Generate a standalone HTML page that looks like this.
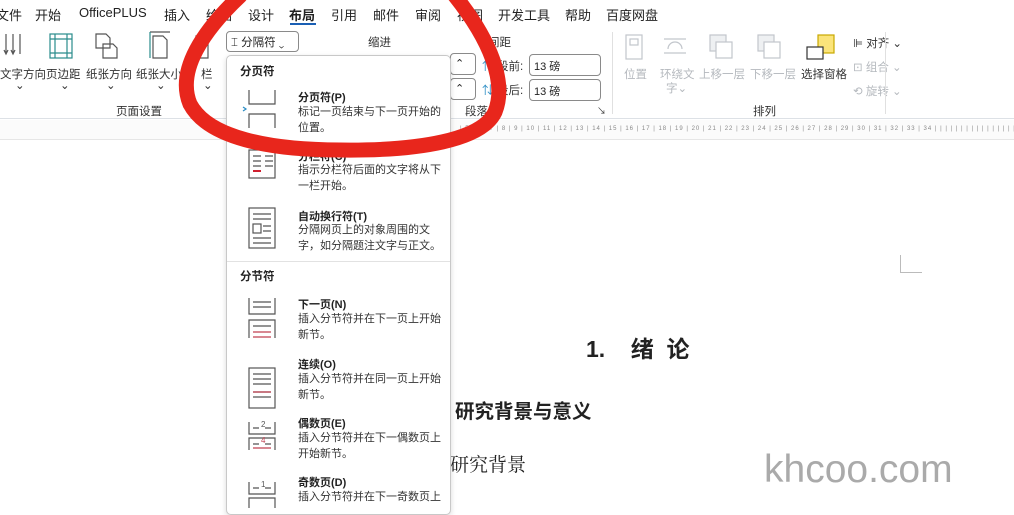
<!DOCTYPE html>
<html><head><meta charset="utf-8"><style>
*{margin:0;padding:0;box-sizing:border-box}
body{width:1014px;height:500px;overflow:hidden;background:#fff;font-family:"Liberation Sans","Noto Sans CJK SC",sans-serif;color:#222;position:relative}
.a{position:absolute;white-space:nowrap}
.tab{font-size:13px;top:5px}
.lbl{font-size:11.5px;color:#333}
.g{color:#b5b9be}
.box{position:absolute;border:1px solid #8a8a8a;border-radius:4px;background:#fff;height:22px;font-size:11px;padding:3px 4px}
.menu{position:absolute;left:226px;top:55px;width:225px;height:460px;background:#fff;border:1px solid #c8c8c8;border-radius:5px;box-shadow:0 2px 6px rgba(0,0,0,.15)}
.mh{position:absolute;left:13px;font-size:11.5px;font-weight:bold}
.mt{position:absolute;left:71px;font-size:11px;font-weight:bold}
.md{position:absolute;left:71px;font-size:11px;line-height:16px;color:#333;width:150px;white-space:normal}
</style></head><body>
<div class="a tab" style="left:-4px">文件</div>
<div class="a tab" style="left:35px">开始</div>
<div class="a tab" style="left:79px">OfficePLUS</div>
<div class="a tab" style="left:164px">插入</div>
<div class="a tab" style="left:206px">绘图</div>
<div class="a tab" style="left:248px">设计</div>
<div class="a tab" style="left:289px;font-weight:bold">布局</div>
<div class="a" style="left:290px;top:23px;width:26px;height:2px;background:#1a5fb4"></div>
<div class="a tab" style="left:331px">引用</div>
<div class="a tab" style="left:373px">邮件</div>
<div class="a tab" style="left:415px">审阅</div>
<div class="a tab" style="left:457px">视图</div>
<div class="a tab" style="left:498px">开发工具</div>
<div class="a tab" style="left:565px">帮助</div>
<div class="a tab" style="left:606px">百度网盘</div>
<div class="a" style="left:0;top:118px;width:1014px;height:1px;background:#dde1e6"></div>
<div class="a" style="left:0;top:120px;width:1014px;height:20px;background:#fbfbfb;border-bottom:1px solid #e6e6e6"></div>
<div class="a" style="left:460px;top:126px;font-size:6px;color:#888;letter-spacing:1px">| 5 | 6 | 7 | 8 | 9 | 10 | 11 | 12 | 13 | 14 | 15 | 16 | 17 | 18 | 19 | 20 | 21 | 22 | 23 | 24 | 25 | 26 | 27 | 28 | 29 | 30 | 31 | 32 | 33 | 34 | | | | | | | | | | | | | | | |</div>
<svg class="a" style="left:0;top:30px" width="220" height="30" fill="none" stroke="#555" stroke-width="1.2">
<path d="M6 4v20M13 4v20M20 4v20M4 20l2 4 2-4M11 20l2 4 2-4"/>
<rect x="50" y="4" width="22" height="24" stroke="#2a8c8c"/><path d="M55 4v24M67 4v24M50 9h22M50 23h22" stroke="#2a8c8c"/>
<path d="M96 4h10l4 4v10h-14zM103 14h10l4 4v10h-14z"/>
<path d="M150 2h20M153 6h10l4 4v18h-14z"/><path d="M150 2v26" stroke="#2a8c8c"/>
<path d="M196 6h12v22h-12z"/>
</svg>
<div class="a lbl" style="left:0;top:66px">文字方向</div>
<div class="a lbl" style="left:46px;top:66px">页边距</div>
<div class="a lbl" style="left:86px;top:66px">纸张方向</div>
<div class="a lbl" style="left:136px;top:66px">纸张大小</div>
<div class="a lbl" style="left:201px;top:66px">栏</div>
<div class="a lbl" style="left:15px;top:78px">⌄</div><div class="a lbl" style="left:60px;top:78px">⌄</div><div class="a lbl" style="left:106px;top:78px">⌄</div><div class="a lbl" style="left:156px;top:78px">⌄</div><div class="a lbl" style="left:203px;top:78px">⌄</div>
<div class="a lbl" style="left:116px;top:103px">页面设置</div>
<div class="a" style="left:226px;top:31px;width:73px;height:21px;border:1px solid #8a8a8a;border-radius:4px;font-size:11.5px;padding:2px 4px">⌶ 分隔符 ⌄</div>
<div class="a lbl" style="left:368px;top:34px">缩进</div>
<div class="a lbl" style="left:488px;top:34px">间距</div>
<div class="box" style="left:450px;top:53px;width:26px">⌃</div>
<div class="box" style="left:450px;top:78px;width:26px">⌃</div>
<div class="a lbl" style="left:482px;top:58px;color:#2a8cc4">⇅</div>
<div class="a lbl" style="left:482px;top:82px;color:#2a8cc4">⇅</div>
<div class="a lbl" style="left:497px;top:58px">段前:</div>
<div class="a lbl" style="left:497px;top:82px">段后:</div>
<div class="box" style="left:529px;top:54px;width:72px">13 磅</div>
<div class="box" style="left:529px;top:79px;width:72px">13 磅</div>
<div class="a lbl" style="left:465px;top:103px">段落</div>
<div class="a lbl" style="left:597px;top:104px;font-size:9px">↘</div>
<div class="a" style="left:612px;top:32px;width:1px;height:82px;background:#e0e0e0"></div>
<svg class="a" style="left:620px;top:33px" width="230" height="32" fill="none" stroke="#c2c6cc" stroke-width="1.2">
<rect x="6" y="2" width="16" height="24"/><rect x="10" y="6" width="8" height="6"/>
<path d="M44 6h22M44 20h22M48 16a7 7 0 0 1 14 0"/>
<rect x="90" y="2" width="16" height="16" fill="#eef0f2"/><rect x="96" y="9" width="16" height="16" fill="#fff"/>
<rect x="138" y="2" width="16" height="16" fill="#eef0f2"/><rect x="144" y="9" width="16" height="16" fill="#fff"/>
<rect x="198" y="2" width="16" height="18" fill="#fbe47a" stroke="#c9a800"/><rect x="187" y="14" width="16" height="12" fill="#fff" stroke="#333"/>
</svg>
<div class="a lbl g" style="left:624px;top:66px">位置</div>
<div class="a lbl g" style="left:660px;top:66px">环绕文</div>
<div class="a lbl g" style="left:666px;top:80px">字⌄</div>
<div class="a lbl g" style="left:699px;top:66px">上移一层</div>
<div class="a lbl g" style="left:750px;top:66px">下移一层</div>
<div class="a lbl" style="left:801px;top:66px">选择窗格</div>
<div class="a lbl" style="left:853px;top:35px">⊫ 对齐 ⌄</div>
<div class="a lbl g" style="left:853px;top:59px">⊡ 组合 ⌄</div>
<div class="a lbl g" style="left:853px;top:83px">⟲ 旋转 ⌄</div>
<div class="a lbl" style="left:753px;top:103px">排列</div>
<div class="a" style="left:885px;top:32px;width:1px;height:82px;background:#e0e0e0"></div>
<div class="a" style="left:900px;top:255px;width:22px;height:18px;border-left:1px solid #bbb;border-bottom:1px solid #bbb"></div>
<div class="a" style="left:586px;top:330px;font-size:23px;font-weight:bold">1.&nbsp;&nbsp;&nbsp;&nbsp;绪&nbsp;&nbsp;论</div>
<div class="a" style="left:455px;top:395px;font-size:19.5px;font-weight:bold">研究背景与意义</div>
<div class="a" style="left:450px;top:450px;font-size:19px;font-family:'Noto Serif CJK SC',serif">研究背景</div>
<div class="a" style="left:764px;top:448px;font-size:39px;color:#aaa">khcoo.com</div>
<div class="menu">
<div class="mh" style="top:7px">分页符</div>
<svg class="a" style="left:14px;top:32px" width="40" height="420" fill="none" stroke="#555" stroke-width="1.2">
<path d="M8 2v14h26v-14M8 40v-14h26v14"/><path d="M2 19l3 2-3 2" stroke="#2a8cc4"/>
<rect x="8" y="62" width="26" height="28"/><path d="M12 68h8M12 73h8M12 78h8M24 68h8M24 73h8M24 78h8"/><path d="M12 83h8" stroke="#d02030" stroke-width="2"/>
<rect x="8" y="120" width="26" height="40"/><path d="M12 126h18M12 131h18M12 150h18M12 155h18M22 138h8M22 143h8"/><rect x="12" y="136" width="8" height="9"/>
<path d="M8 210v16h26v-16M8 250v-18h26v18M12 214h18M12 219h18M12 238h18" /><path d="M12 244h18M12 249h18" stroke="#c04050"/>
<rect x="8" y="280" width="26" height="40"/><path d="M12 286h18M12 291h18M12 296h18M12 304h18M12 309h18" /><path d="M12 304h18" stroke="#c04050"/>
<path d="M8 334v12h26v-12M8 362v-12h26v12M12 340h6M24 340h6M12 356h6M24 356h6"/><path d="M12 360h18" stroke="#c04050"/>
<path d="M8 394v12h26v-12M8 420v-10h26v10M12 400h6M24 400h6"/>
</svg>
<div class="a" style="left:34px;top:364px;font-size:8px;color:#555">2</div>
<div class="a" style="left:34px;top:380px;font-size:8px;color:#c04050">4</div>
<div class="a" style="left:34px;top:424px;font-size:8px;color:#555">1</div>
<div class="mt" style="top:33px">分页符(P)</div>
<div class="md" style="top:48px">标记一页结束与下一页开始的位置。</div>
<div class="mt" style="top:92px">分栏符(C)</div>
<div class="md" style="top:106px">指示分栏符后面的文字将从下一栏开始。</div>
<div class="mt" style="top:152px">自动换行符(T)</div>
<div class="md" style="top:166px">分隔网页上的对象周围的文字，如分隔题注文字与正文。</div>
<div class="a" style="left:0;top:205px;width:223px;height:1px;background:#e2e2e2"></div>
<div class="mh" style="top:212px">分节符</div>
<div class="mt" style="top:240px">下一页(N)</div>
<div class="md" style="top:255px">插入分节符并在下一页上开始新节。</div>
<div class="mt" style="top:300px">连续(O)</div>
<div class="md" style="top:315px">插入分节符并在同一页上开始新节。</div>
<div class="mt" style="top:359px">偶数页(E)</div>
<div class="md" style="top:374px">插入分节符并在下一偶数页上开始新节。</div>
<div class="mt" style="top:418px">奇数页(D)</div>
<div class="md" style="top:433px">插入分节符并在下一奇数页上</div>
</div>
<svg class="a" style="left:0;top:0" width="1014" height="500" fill="none">
<path d="M240 -4C204 30 176 70 190 104C208 138 270 150 340 150C420 151 482 140 495 112C507 82 490 40 455 -4" stroke="#e8261c" stroke-width="15" stroke-linecap="round"/>
</svg>
</body></html>
